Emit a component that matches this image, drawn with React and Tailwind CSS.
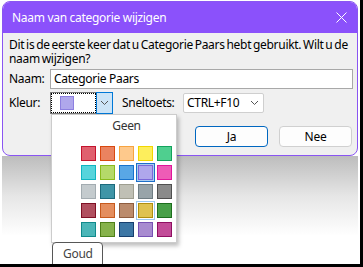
import React from "react";

const swatches = [
  [["#e0606e", "#c4142e"], ["#ea8360", "#d9480f"], ["#fec98c", "#f7a440"], ["#fdee5c", "#f2d600"], ["#4fcf8f", "#13a35c"]],
  [["#56d4dc", "#11b5c2"], ["#b5d969", "#8abb1d"], ["#59a7e6", "#1a73cc"], ["#afa7ec", "#7b68d8"], ["#ee5cb6", "#e0169a"]],
  [["#c4cbce", "#a3acb1"], ["#3f95a7", "#1c6a7c"], ["#c0c0b5", "#9e9e90"], ["#98a4a9", "#6f7d83"], ["#8a8a8a", "#4f4f4f"]],
  [["#b04f5f", "#7f1025"], ["#e48e5e", "#c75a1d"], ["#bb8b6c", "#8f5d3f"], ["#dfc250", "#b08f10"], ["#48a048", "#1d6e1d"]],
  [["#4bb6b8", "#10898b"], ["#86b24b", "#4f8019"], ["#3d77a5", "#173f6e"], ["#a88bd0", "#7752b4"], ["#c24c98", "#8f0f62"]],
];

function Chevron() {
  return (
    <svg width="9" height="6" viewBox="0 0 9 6">
      <path d="M1 1 L4.5 4.5 L8 1" fill="none" stroke="#555" strokeWidth="1" />
    </svg>
  );
}

function Swatch({ fill, border, ring }) {
  const ringCls =
    ring === "sel"
      ? "shadow-[0_0_0_1px_#a9cdf0,0_0_0_2px_#1c6fc9]"
      : ring === "hover"
      ? "shadow-[0_0_0_1px_#ffffff,0_0_0_2px_#9cc8ee]"
      : "";
  return (
    <div
      className={`w-[15px] h-[15px] border ${ringCls}`}
      style={{ backgroundColor: fill, borderColor: border }}
    />
  );
}

export default function App() {
  return (
    <div className="w-[363px] h-[267px] bg-black overflow-hidden">
      <div className="relative w-[360px] h-[264px] bg-white overflow-hidden flex flex-col pl-[2px] pt-[1px] font-['Noto_Sans',sans-serif] text-[12px] tracking-[-0.3px] text-black">
        {/* Dialog */}
        <div className="w-[356px] rounded-[8px] border border-[#8a55f2] overflow-hidden flex flex-col bg-[#f0f0f0]">
          <div className="h-[31px] bg-[#8b51fb] flex items-center justify-between pl-[9px] pr-[9px] text-white">
            <span className="leading-[16px]">Naam van categorie wijzigen</span>
            <svg width="11" height="11" viewBox="0 0 11 11" className="mr-[1px]">
              <path d="M0.5 0.5 L10.5 10.5 M10.5 0.5 L0.5 10.5" stroke="#fff" strokeWidth="1" />
            </svg>
          </div>
          <div className="flex flex-col pl-[6px] pt-[5px] pb-[8px]">
            <p className="leading-[14px] whitespace-nowrap [word-spacing:-1px]">
              Dit is de eerste keer dat u Categorie Paars hebt gebruikt. Wilt u de
              <br />
              naam wijzigen?
            </p>
            <div className="flex items-center h-[20px] mt-[3px]">
              <span className="w-[41px]">Naam:</span>
              <div className="w-[303px] h-[20px] border border-[#a8a8a8] bg-white pl-[3px] flex items-center leading-[16px]">
                Categorie Paars
              </div>
            </div>
            <div className="flex items-center h-[22px] mt-[3px]">
              <span className="w-[41px]">Kleur:</span>
              <div className="w-[63px] h-[22px] border border-[#7a7a7a] bg-white flex">
                <div className="flex-1 border border-dotted border-black flex items-center pl-[8px]">
                  <div className="w-[14px] h-[14px] bg-[#afa7ec] border border-[#8d80e0]" />
                </div>
                <div className="w-[17px] h-[22px] -mt-[1px] -mr-[1px] bg-[#cce4f7] border border-[#0078d7] flex items-center justify-center">
                  <Chevron />
                </div>
              </div>
              <span className="w-[61px] ml-[9px]">Sneltoets:</span>
              <div className="w-[81px] h-[20px] border border-[#cfcfcf] rounded-[2px] bg-white flex items-center justify-between pl-[3px] pr-[4px] leading-[16px]">
                <span>CTRL+F10</span>
                <Chevron />
              </div>
            </div>
            <div className="flex justify-end gap-[11px] mt-[12px] pr-[5px]">
              <button className="w-[73px] h-[21px] rounded-[4px] border-[1.5px] border-[#0067c0] bg-[#fdfdfd] leading-[16px] flex items-center justify-center">
                Ja
              </button>
              <button className="w-[73px] h-[21px] rounded-[4px] border border-[#d0d0d0] bg-[#fdfdfd] leading-[16px] flex items-center justify-center">
                Nee
              </button>
            </div>
          </div>
        </div>
        {/* Shadow below dialog */}
        <div className="w-[356px] h-[80px] bg-linear-to-b from-[#bdbdbd] via-[#e6e6e6] to-white" />

        {/* Color dropdown popup */}
        <div className="absolute left-[51px] top-[114px] w-[126px] h-[129px] bg-white border border-[#cccccc] shadow-[2px_3px_4px_rgba(0,0,0,0.25)] flex flex-col pt-[3px]">
          <div className="ml-[29px] w-[91px] flex flex-col">
            <div className="text-center leading-[16px] text-[#333]">Geen</div>
            <div className="grid grid-cols-5 gap-[4px] mt-[12px]">
              {swatches.map((row, r) =>
                row.map(([fill, border], c) => (
                  <Swatch
                    key={`${r}-${c}`}
                    fill={fill}
                    border={border}
                    ring={r === 1 && c === 3 ? "sel" : r === 3 && c === 3 ? "hover" : null}
                  />
                ))
              )}
            </div>
          </div>
        </div>

        {/* Tooltip */}
        <div className="absolute left-[52px] top-[242px] w-[51px] h-[26px] border border-[#575757] rounded-[4px] bg-white pl-[10px] pt-[3px] text-[#444] leading-[16px]">
          Goud
        </div>
      </div>
    </div>
  );
}
